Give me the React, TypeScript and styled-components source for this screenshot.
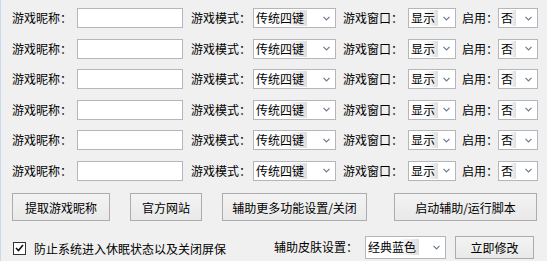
import React from 'react';
import styled, { createGlobalStyle } from 'styled-components';

const GlobalStyle = createGlobalStyle`
    html, body {
        margin: 0;
        padding: 0;
        background: #f0f0f0;
    }
    body {
        font-family: "Noto Sans CJK SC", "Noto Sans", sans-serif;
        font-size: 12px;
        color: #000;
    }
`;

const Window = styled.div`
    width: 547px;
    height: 261px;
    box-sizing: border-box;
    border-left: 1px solid #c6daf2;
    padding: 8px 10px 0 11px;
    background: #f0f0f0;
    overflow: hidden;
`;

const Rows = styled.div`
    display: flex;
    flex-direction: column;
    gap: 10.5px;
`;

const Row = styled.div`
    display: flex;
    align-items: center;
    height: 20px;
`;

const Label = styled.span<{ $w: number; $ml?: number }>`
    width: ${p => p.$w}px;
    margin-left: ${p => p.$ml || 0}px;
    white-space: nowrap;
    line-height: 20px;
    flex-shrink: 0;
`;

const TextBox = styled.div`
    width: 106px;
    height: 20px;
    box-sizing: border-box;
    border: 1px solid #b4b6bb;
    background: #fff;
    flex-shrink: 0;
`;

const Combo = styled.div<{ $w: number; $h?: number }>`
    width: ${p => p.$w}px;
    height: ${p => p.$h || 20}px;
    box-sizing: border-box;
    border: 1px solid #b4b6bb;
    background: #fff;
    display: flex;
    align-items: center;
    justify-content: space-between;
    padding: 0 5px 0 2px;
    flex-shrink: 0;
    .value {
        line-height: 16px;
        padding-right: 3px;
        background: linear-gradient(to right, rgba(255,255,255,0) 55%, #dedede 100%);
    }
`;

const Chevron = () => (
    <svg width="7" height="5" viewBox="0 0 7 5">
        <path d="M0.5 0.8 L3.5 3.8 L6.5 0.8" fill="none" stroke="#6b7a8c" strokeWidth="1.2" />
    </svg>
);

const Select: React.FC<{ w: number; h?: number; value: string }> = ({ w, h, value }) => (
    <Combo $w={w} $h={h}>
        <span className="value">{value}</span>
        <Chevron />
    </Combo>
);

const ButtonRow = styled.div`
    display: flex;
    align-items: center;
    margin-top: 12.5px;
    height: 28px;
`;

const Button = styled.div<{ $w: number; $ml?: number; $h?: number }>`
    width: ${p => p.$w}px;
    height: ${p => p.$h || 28}px;
    margin-left: ${p => p.$ml || 0}px;
    box-sizing: border-box;
    border: 1px solid #acacac;
    background: linear-gradient(#f3f3f3, #e9e9e9);
    display: flex;
    align-items: center;
    justify-content: center;
    white-space: nowrap;
    flex-shrink: 0;
`;

const BottomRow = styled.div`
    display: flex;
    align-items: center;
    margin-top: 14px;
    height: 24px;
`;

const Check = styled.div`
    width: 13px;
    height: 13px;
    box-sizing: border-box;
    border: 1px solid #333;
    background: #fff;
    display: flex;
    align-items: center;
    justify-content: center;
    margin: 2px 8px 0 1px;
    flex-shrink: 0;
`;

const CheckText = styled.span`
    width: 240px;
    white-space: nowrap;
    margin-top: 2px;
`;

const players = [1, 2, 3, 4, 5, 6];

export default function App() {
    return (
        <Window>
            <GlobalStyle />
            <Rows>
                {players.map(n => (
                    <Row key={n}>
                        <Label $w={65}>游戏昵称：</Label>
                        <TextBox />
                        <Label $w={62} $ml={8}>游戏模式：</Label>
                        <Select w={83} value="传统四键" />
                        <Label $w={65} $ml={7}>游戏窗口：</Label>
                        <Select w={48} value="显示" />
                        <Label $w={36} $ml={6}>启用：</Label>
                        <Select w={40} value="否" />
                    </Row>
                ))}
            </Rows>
            <ButtonRow>
                <Button $w={98}>提取游戏昵称</Button>
                <Button $w={72} $ml={20}>官方网站</Button>
                <Button $w={145} $ml={20}>辅助更多功能设置/关闭</Button>
                <Button $w={143} $ml={27}>启动辅助/运行脚本</Button>
            </ButtonRow>
            <BottomRow>
                <Check>
                    <svg width="9" height="8" viewBox="0 0 9 8">
                        <path d="M1 4 L3.5 6.5 L8 1" fill="none" stroke="#111" strokeWidth="1.6" />
                    </svg>
                </Check>
                <CheckText>防止系统进入休眠状态以及关闭屏保</CheckText>
                <Label $w={91}>辅助皮肤设置：</Label>
                <Select w={81} h={23} value="经典蓝色" />
                <Button $w={79} $h={23} $ml={9}>立即修改</Button>
            </BottomRow>
        </Window>
    );
}
